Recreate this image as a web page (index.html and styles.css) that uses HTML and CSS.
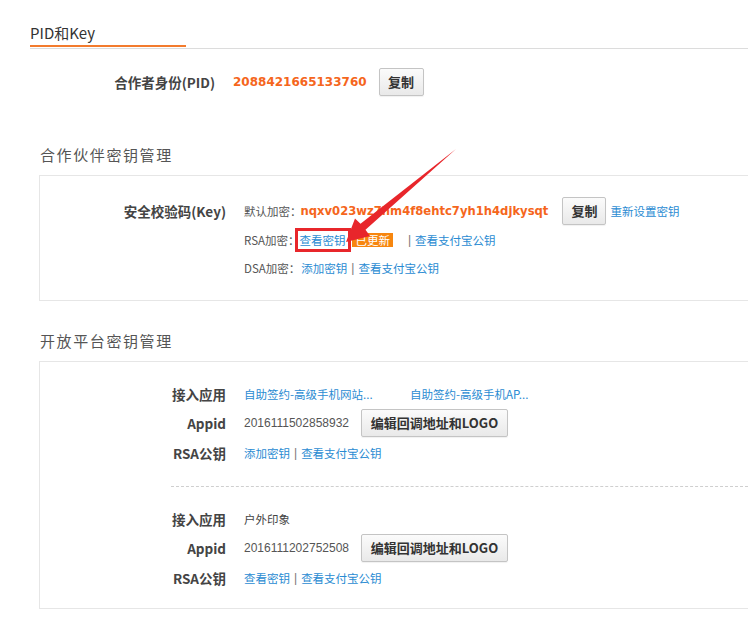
FILE: index.html
```html
<!DOCTYPE html>
<html lang="zh-CN">
<head>
<meta charset="utf-8">
<title>PID和Key</title>
<link rel="stylesheet" href="styles.css">
</head>
<body>
<div class="page">
  <div class="tabs">
    <div class="tab">PID和Key</div>
  </div>

  <div class="pid-row">
    <div class="pid-label">合作者身份(PID)</div>
    <div class="pid-value">
      <span class="orange-num">2088421665133760</span>
      <button class="btn btn-copy-pid">复制</button>
    </div>
  </div>

  <h2 class="section-title">合作伙伴密钥管理</h2>
  <div class="box box-key">
    <div class="row row-key">
      <div class="label">安全校验码(Key)</div>
      <div class="value">
        <span class="gray">默认加密：</span><span class="orange-num key-num">nqxv023wz7hm4f8ehtc7yh1h4djkysqt</span>
        <button class="btn btn-copy-key">复制</button>
        <a class="link reset-link" href="#">重新设置密钥</a>
      </div>
    </div>
    <div class="row row-sub">
      <div class="label"></div>
      <div class="value">
        <span class="gray">RSA加密：</span><span class="mark"><a class="link" href="#">查看密钥</a></span><span class="badge">已更新</span><span class="sep sep-wide">|</span><a class="link" href="#">查看支付宝公钥</a>
      </div>
    </div>
    <div class="row row-sub">
      <div class="label"></div>
      <div class="value">
        <span class="gray">DSA加密：</span><a class="link dsa-first" href="#">添加密钥</a><span class="sep">|</span><a class="link" href="#">查看支付宝公钥</a>
      </div>
    </div>
  </div>

  <h2 class="section-title second">开放平台密钥管理</h2>
  <div class="box box-open">
    <div class="group">
      <div class="row r-first">
        <div class="label">接入应用</div>
        <div class="value"><a class="link app-name" href="#">自助签约-高级手机网站...</a><a class="link" href="#">自助签约-高级手机AP...</a></div>
      </div>
      <div class="row r-next">
        <div class="label">Appid</div>
        <div class="value"><span class="appid">2016111502858932</span><button class="btn btn-edit">编辑回调地址和LOGO</button></div>
      </div>
      <div class="row r-next">
        <div class="label">RSA公钥</div>
        <div class="value"><a class="link" href="#">添加密钥</a><span class="sep">|</span><a class="link" href="#">查看支付宝公钥</a></div>
      </div>
    </div>
    <div class="dash"></div>
    <div class="group">
      <div class="row r-first">
        <div class="label">接入应用</div>
        <div class="value"><span class="plain">户外印象</span></div>
      </div>
      <div class="row r-next">
        <div class="label">Appid</div>
        <div class="value"><span class="appid">2016111202752508</span><button class="btn btn-edit">编辑回调地址和LOGO</button></div>
      </div>
      <div class="row r-next">
        <div class="label">RSA公钥</div>
        <div class="value"><a class="link" href="#">查看密钥</a><span class="sep">|</span><a class="link" href="#">查看支付宝公钥</a></div>
      </div>
    </div>
  </div>
</div>

<svg class="arrow" width="748" height="617" viewBox="0 0 748 617" aria-hidden="true">
  <polygon points="456,149 365.5,229.8 370,236 346,242 355,218.5 360.5,223.8" fill="#e8262b"/>
</svg>
</body>
</html>
```

FILE: styles.css
```css
html, body {
  margin: 0;
  padding: 0;
  overflow: hidden;
  background: #fff;
}
body {
  position: relative;
  width: 748px;
  height: 617px;
  font-family: "Liberation Sans", "Noto Sans CJK SC", sans-serif;
  font-size: 12px;
  color: #333;
}
.page {
  margin-left: 30px;
}
.tabs {
  height: 48px;
  border-bottom: 1px solid #dcdcdc;
}
.tab {
  width: 156px;
  height: 23px;
  padding-top: 22px;
  line-height: 22px;
  font-size: 15px;
  color: #333;
  border-bottom: 2px solid #f37b2d;
  font-family: "Noto Sans CJK SC", sans-serif;
}
.pid-row {
  display: grid;
  grid-template-columns: 185px 1fr;
  column-gap: 18px;
  margin-top: 19px;
  height: 28px;
  align-items: center;
}
.pid-label, .label {
  text-align: right;
  font-weight: bold;
  font-size: 13.5px;
  color: #444;
  font-family: "Noto Sans CJK SC", sans-serif;
  line-height: 20px;
}
.pid-value, .value {
  display: flex;
  align-items: center;
  white-space: nowrap;
}
.orange-num {
  font-family: "DejaVu Sans", sans-serif;
  font-weight: bold;
  font-size: 12px;
  color: #f5661c;
}
.btn {
  font-family: "Noto Sans CJK SC", sans-serif;
  font-weight: bold;
  font-size: 13px;
  color: #333;
  height: 28px;
  padding: 0;
  border: 1px solid #c4c4c4;
  border-radius: 2px;
  background: linear-gradient(#fbfbfb, #e9e9e9);
  box-shadow: 0 1px 1px rgba(0,0,0,0.06);
  line-height: 26px;
  cursor: pointer;
}
.btn-copy-pid {
  width: 45px;
  margin-left: 12px;
}
.section-title {
  margin: 49px 0 0 10px;
  font-size: 15px;
  font-weight: normal;
  letter-spacing: 1.6px;
  line-height: 20px;
  color: #555;
  font-family: "Noto Sans CJK SC", sans-serif;
}
.section-title.second {
  margin-top: 30px;
}
.box {
  margin: 10px 0 0 9px;
  border: 1px solid #e6e6e6;
  border-right: none;
}
.box-key {
  padding: 21px 0 18px;
}
.row {
  display: grid;
  grid-template-columns: 186px 1fr;
  column-gap: 18px;
  align-items: center;
}
.row-key {
  height: 28px;
  margin-bottom: 1px;
}
.row-sub {
  height: 28px;
}
.gray {
  color: #555;
  font-family: "Noto Sans CJK SC", sans-serif;
  font-size: 11.5px;
}
.key-num {
  margin-left: -1px;
  font-size: 11.6px;
}
.btn-copy-key {
  width: 44px;
  margin-left: 14px;
}
.link {
  color: #2a8bd2;
  text-decoration: none;
  font-family: "Noto Sans CJK SC", sans-serif;
  font-size: 11.5px;
  line-height: 18px;
}
.reset-link {
  margin-left: 4px;
}
.mark {
  display: inline-block;
  box-sizing: border-box;
  width: 56px;
  height: 24px;
  margin-left: -4px;
  padding: 0 0 0 1px;
  border: 3px solid #e8262b;
  line-height: 18px;
}
.badge {
  display: inline-block;
  height: 14px;
  line-height: 14px;
  padding: 0 3px;
  margin-left: 1px;
  background: #f7860f;
  color: #fff;
  font-family: "Noto Sans CJK SC", sans-serif;
  font-size: 11.5px;
}
.sep {
  color: #777;
  margin: 0 4px;
  font-size: 12px;
}
.sep-wide {
  margin-left: 15px;
}
.dsa-first {
  margin-left: 1px;
}
.box-open {
  padding: 18px 0 15px;
}
.r-first {
  height: 28px;
}
.r-next {
  height: 30px;
}
.app-name {
  display: inline-block;
  width: 166px;
}
.appid {
  font-size: 12px;
  color: #555;
  width: 117px;
}
.btn-edit {
  width: 147px;
}
.plain {
  color: #444;
  font-family: "Noto Sans CJK SC", sans-serif;
  font-size: 11.5px;
}
.dash {
  margin: 18px 0 18px 131px;
  border-top: 1px dashed #cfcfcf;
  height: 0;
}
.arrow {
  position: absolute;
  left: 0;
  top: 0;
  pointer-events: none;
}
```
